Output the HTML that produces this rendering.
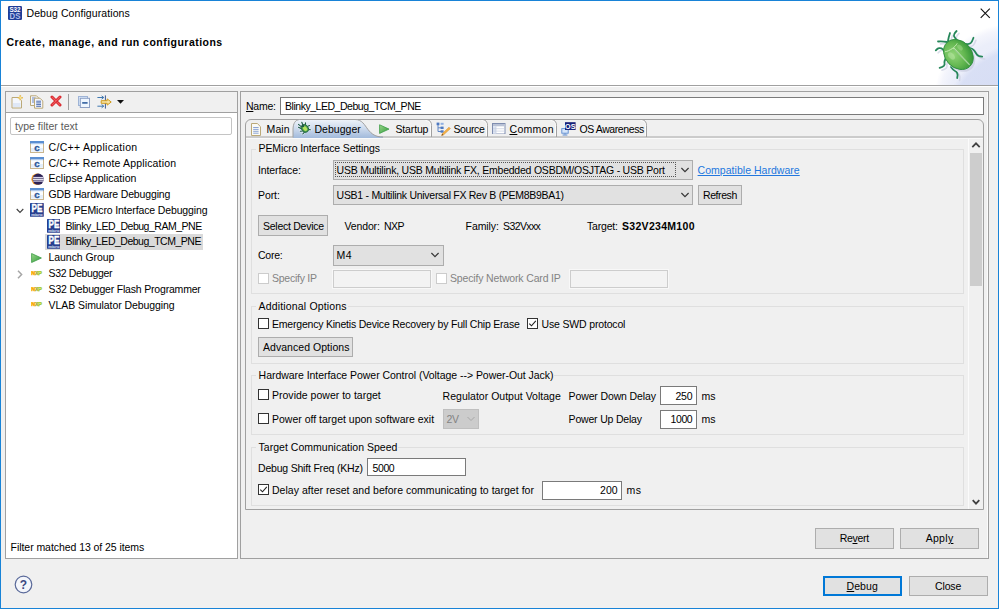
<!DOCTYPE html>
<html lang="en"><head><meta charset="utf-8"><title>Debug Configurations</title>
<style>
*{box-sizing:border-box}
html,body{margin:0;padding:0}
body{width:999px;height:609px;overflow:hidden;position:relative;background:#f0f0f0;font-family:'Liberation Sans',sans-serif;font-size:10.5px;color:#000}
.a{position:absolute}
.t{position:absolute;white-space:pre;line-height:14px;height:14px;color:#000}
.b{font-weight:bold}
.g6{color:#5a5a5a}
.g8{color:#838383}
.lnk{color:#2277de;text-decoration:underline}
u{text-decoration:underline;text-underline-offset:1px}
.win{left:0;top:0;width:999px;height:609px;border:1px solid #1883d7;z-index:50;pointer-events:none}
.hdr{left:1px;top:1px;width:997px;height:84px;background:#fff;overflow:hidden}
.sep1{left:1px;top:85px;width:997px;height:1px;background:#a0a0a0}
.sep2{left:1px;top:86px;width:997px;height:1px;background:#fff}
.lp{left:5px;top:91px;width:233px;height:468px;border:1px solid #a0a0a0;background:#fff}
.ltb{left:6px;top:92px;width:231px;height:21px;background:#f0f0f0;border-bottom:1px solid #a0a0a0}
.flt{left:10px;top:117px;width:222px;height:18px;border:1px solid #c4c4c4;border-radius:2px;background:#fff}
.sel{left:45px;top:234px;width:158px;height:16px;background:#dadada}
.rp{left:240px;top:91px;width:749px;height:468px;border:1px solid #a0a0a0}
.rp2{left:987px;top:92px;width:1px;height:466px;background:#fbfbfb}
.inp{background:#fff;border:1px solid #7a7a7a}
.dis{background:#f3f3f3;border:1px solid #cdcdcd;box-shadow:0 0 0 1px #f8f8f8}
.cmb{background:#e1e1e1;border:1px solid #adadad}
.btn{background:#e1e1e1;border:1px solid #adadad}
.grp{border:1px solid #dfdfdf}
.gl{background:#f0f0f0;height:3px}
.cb{width:11px;height:11px;background:#fff;border:1px solid #333}
.cbd{width:11px;height:11px;background:#fff;border:1px solid #cccccc}
.tf{left:245px;top:119px;width:739px;height:391px;border:1px solid #a0a0a0;border-radius:6px 6px 0 0}
.tfl{left:246px;top:136px;width:737px;height:1px;background:#a0a0a0}
.tfl2{left:246px;top:138px;width:737px;height:1px;background:#fafafa}
.sbt{left:968px;top:139px;width:15px;height:370px;background:#f0f0f0;border-left:1px solid #fbfbfb}
.sbth{left:970px;top:153px;width:12px;height:133px;background:#cdcdcd}
</style></head><body>
<div class="a hdr" style="background:radial-gradient(circle at 1029px 129px,rgba(210,217,243,.9) 0,rgba(214,221,244,.85) 82px,rgba(224,229,247,0) 89px),radial-gradient(circle at 1009px 99px,#e6e9f8 0,#ebeefa 60px,#f4f5fc 70px,#fff 76px),#fff"></div>
<div class="a sep1"></div><div class="a sep2"></div>
<!-- title icon -->
<svg class="a" style="left:8px;top:6px" width="14" height="14" viewBox="0 0 14 14"><rect width="14" height="14" rx="1.2" fill="#1f3e97"/><text x="1.4" y="5.9" font-family="'Liberation Sans',sans-serif" font-weight="bold" font-size="6.4" fill="#fff" textLength="11.2" lengthAdjust="spacingAndGlyphs">S32</text><text x="1.6" y="12.6" font-family="'Liberation Sans',sans-serif" font-weight="bold" font-size="8.4" fill="#b4c1ea" textLength="10.8" lengthAdjust="spacingAndGlyphs">DS</text></svg>
<!-- close X -->
<svg class="a" style="left:980px;top:8px" width="11" height="11" viewBox="0 0 11 11"><path d="M0.7 0.7L9.8 9.8M9.8 0.7L0.7 9.8" stroke="#111" stroke-width="1.1" fill="none"/></svg>
<!-- bug -->
<svg class="a" style="left:930px;top:26px" width="60" height="58" viewBox="0 0 60 58">
<defs><radialGradient id="bg1" cx="0.36" cy="0.4" r="0.7"><stop offset="0" stop-color="#93d57a"/><stop offset="0.55" stop-color="#63b750"/><stop offset="0.9" stop-color="#3c9a3c"/><stop offset="1" stop-color="#2f8a36"/></radialGradient></defs>
<g fill="none" stroke="#cfd2e4" stroke-width="1.6" stroke-linecap="round" stroke-linejoin="round" transform="translate(2.4,2.4)" opacity="0.75"><path d='M17.0 16.0Q12.0 15.0 8.0 15.5'/><path d='M18.0 15.0Q18.6 11.0 20.0 7.0'/><path d='M27.5 15.0Q25.5 12.5 24.6 11.2Q23.6 10.0 24.1 8.5Q24.5 7.0 26.6 5.0'/><path d='M33.0 17.0Q36.0 18.5 37.8 18.1Q39.5 17.8 40.8 16.9Q42.0 16.0 43.5 11.8'/><path d='M39.0 21.5Q43.0 22.5 44.2 24.5Q45.5 26.5 46.8 28.5Q48.0 30.5 52.2 30.6'/><path d='M15.5 26.5Q13.0 23.0 11.5 22.4Q10.0 21.8 8.8 22.2Q7.5 22.6 5.8 24.4'/><path d='M16.0 32.0Q14.0 35.5 14.5 37.0Q15.0 38.5 13.8 39.8Q12.5 41.0 9.6 41.8'/><path d='M21.0 41.0Q23.5 44.5 25.0 45.0Q26.5 45.5 27.2 47.0Q28.0 48.5 27.2 52.0'/></g>
<g fill="none" stroke="#26875a" stroke-width="1.8" stroke-linecap="round" stroke-linejoin="round"><path d='M17.0 16.0Q12.0 15.0 8.0 15.5'/><path d='M18.0 15.0Q18.6 11.0 20.0 7.0'/><path d='M27.5 15.0Q25.5 12.5 24.6 11.2Q23.6 10.0 24.1 8.5Q24.5 7.0 26.6 5.0'/><path d='M33.0 17.0Q36.0 18.5 37.8 18.1Q39.5 17.8 40.8 16.9Q42.0 16.0 43.5 11.8'/><path d='M39.0 21.5Q43.0 22.5 44.2 24.5Q45.5 26.5 46.8 28.5Q48.0 30.5 52.2 30.6'/><path d='M15.5 26.5Q13.0 23.0 11.5 22.4Q10.0 21.8 8.8 22.2Q7.5 22.6 5.8 24.4'/><path d='M16.0 32.0Q14.0 35.5 14.5 37.0Q15.0 38.5 13.8 39.8Q12.5 41.0 9.6 41.8'/><path d='M21.0 41.0Q23.5 44.5 25.0 45.0Q26.5 45.5 27.2 47.0Q28.0 48.5 27.2 52.0'/></g>
<ellipse cx="30.2" cy="30.6" rx="13.3" ry="16.8" transform="rotate(-44 30.2 30.6)" fill="#c3c7da" opacity="0.6"/>
<ellipse cx="28.4" cy="28.5" rx="13.2" ry="16.5" transform="rotate(-44 28.4 28.5)" fill="url(#bg1)" stroke="#2f8f40" stroke-width="0.9"/>
<path d="M23.5 22.2L39.6 38.8" stroke="#d9f2cc" stroke-width="1.1" fill="none"/>
<path d="M24 23L40.2 39.6" stroke="#3c9440" stroke-width="0.6" fill="none" opacity="0.7"/>
<path d="M15 25.8C19.5 25 25.5 21 27.2 17.4" stroke="#c6ebb4" stroke-width="1" fill="none"/>
<ellipse cx="21.5" cy="30" rx="2.6" ry="4.2" transform="rotate(-44 21.5 30)" fill="#c4ecb0" opacity="0.45"/>
<ellipse cx="30" cy="21.5" rx="2" ry="3.4" transform="rotate(-44 30 21.5)" fill="#c4ecb0" opacity="0.35"/>
</svg>
<!-- left panel -->
<div class="a lp"></div><div class="a ltb"></div>
<div class="a flt"></div>
<div class="a sel"></div>
<svg class='a' style='left:11px;top:95px' width='13' height='14' viewBox='0 0 13 14'><path d='M1 2.5h6.5l3 3V13H1z' fill='#f4f7fc' stroke='#bba978' stroke-width='1'/><path d='M2 8h7.5v4H2z' fill='#dfe8f6'/><path d='M9.3 0.3v5M6.8 2.8h5' stroke='#e3b53c' stroke-width='1.6'/><path d='M9.3 1.2v3.2M7.7 2.8h3.2' stroke='#fff6c8' stroke-width='0.6'/></svg>
<svg class='a' style='left:30px;top:95px' width='14' height='14' viewBox='0 0 14 14'><path d='M0.5 0.8h6l2 2V10.5h-8z' fill='#f4f6fb' stroke='#bba978' stroke-width='1'/><path d='M2 3h3.5M2 5h3.5M2 7h3.5' stroke='#5b79b8' stroke-width='0.9'/><path d='M4.5 3.2h5.5l2.8 2.8V13.2H4.5z' fill='#f4f6fb' stroke='#bba978' stroke-width='1'/><path d='M6.2 6.2h4.8M6.2 7.9h4.8M6.2 9.6h4.8M6.2 11.3h4.8' stroke='#4f6fb0' stroke-width='1'/></svg>
<svg class='a' style='left:50.3px;top:95.3px' width='12' height='12' viewBox='0 0 12 12'><path d='M2 2L10 10M10 2L2 10' stroke='#d8262c' stroke-width='3' stroke-linecap='round'/><path d='M2.2 2.2L9.8 9.8M9.8 2.2L2.2 9.8' stroke='#ee5a5f' stroke-width='1.1' stroke-linecap='round'/></svg>
<div class='a' style='left:68px;top:94px;width:1px;height:16px;background:#a0a0a0'></div>
<svg class='a' style='left:78px;top:96px' width='12' height='12' viewBox='0 0 12 12'><rect x='0.5' y='0.5' width='9' height='9' fill='#dbe9fa' stroke='#9fb4d6'/><rect x='2.3' y='2.3' width='9.2' height='9.2' fill='#eef6ff' stroke='#8c9fc4'/><rect x='4.2' y='6.1' width='5.4' height='1.6' fill='#2f5f9e'/></svg>
<svg class='a' style='left:97px;top:95px' width='15' height='14' viewBox='0 0 15 14'><path d='M8.4 0.4V13.6' stroke='#3d5a92' stroke-width='1'/><path d='M0.4 2.5H6.6M4.6 0.9L6.8 2.5L4.6 4.1' stroke='#3f78b0' stroke-width='1' fill='none'/><path d='M0.4 11.2H6.6M4.6 9.6L6.8 11.2L4.6 12.8' stroke='#3f78b0' stroke-width='1' fill='none'/><path d='M4.2 5.7H10.2V3.9L14.2 7L10.2 10.1V8.3H4.2Z' fill='#f6e3a6' stroke='#cf9a1c' stroke-width='1' stroke-linejoin='round'/></svg>
<svg class='a' style='left:117px;top:100px' width='7' height='4' viewBox='0 0 7 4'><path d='M0 0H7L3.5 3.8Z' fill='#111'/></svg>
<svg class='a' style='left:30px;top:141px' width='14' height='12' viewBox='0 0 14 12'><rect x='0.5' y='0.5' width='13' height='11' fill='#fbfdff' stroke='#c9b68f' stroke-width='1'/><rect x='0' y='0' width='14' height='2.6' fill='#5b8fd2'/><rect x='1' y='2.6' width='12' height='0.8' fill='#cfe0f5'/><rect x='1' y='7' width='12' height='3.6' fill='#e3eefb'/><text x='7.1' y='10.2' font-family="'Liberation Sans',sans-serif" font-weight='bold' font-size='9.8' fill='#2a5596' stroke='#2a5596' stroke-width='0.3' text-anchor='middle'>c</text></svg>
<svg class='a' style='left:30px;top:156.7px' width='14' height='12' viewBox='0 0 14 12'><rect x='0.5' y='0.5' width='13' height='11' fill='#fbfdff' stroke='#c9b68f' stroke-width='1'/><rect x='0' y='0' width='14' height='2.6' fill='#5b8fd2'/><rect x='1' y='2.6' width='12' height='0.8' fill='#cfe0f5'/><rect x='1' y='7' width='12' height='3.6' fill='#e3eefb'/><text x='7.1' y='10.2' font-family="'Liberation Sans',sans-serif" font-weight='bold' font-size='9.8' fill='#2a5596' stroke='#2a5596' stroke-width='0.3' text-anchor='middle'>c</text></svg>
<svg class='a' style='left:30.8px;top:172.8px' width='13.2' height='12.4' viewBox='0 0 13.2 12.4'><circle cx='6' cy='6.2' r='5.6' fill='#f59a23'/><circle cx='7.2' cy='6.2' r='5.6' fill='#2c2255'/><rect x='2.2' y='3.9' width='10.4' height='1.2' fill='#d9d6ea'/><rect x='1.8' y='5.7' width='11' height='1.2' fill='#f4f3fa'/><rect x='2.2' y='7.5' width='10.4' height='1.2' fill='#d9d6ea'/></svg>
<svg class='a' style='left:30px;top:188.3px' width='14' height='12' viewBox='0 0 14 12'><rect x='0.5' y='0.5' width='13' height='11' fill='#fbfdff' stroke='#c9b68f' stroke-width='1'/><rect x='0' y='0' width='14' height='2.6' fill='#5b8fd2'/><rect x='1' y='2.6' width='12' height='0.8' fill='#cfe0f5'/><rect x='1' y='7' width='12' height='3.6' fill='#e3eefb'/><text x='7.1' y='10.2' font-family="'Liberation Sans',sans-serif" font-weight='bold' font-size='9.8' fill='#2a5596' stroke='#2a5596' stroke-width='0.3' text-anchor='middle'>c</text></svg>
<svg class='a' style='left:16px;top:208px' width='8' height='6' viewBox='0 0 8 6'><path d='M0.7 1L4 4.4L7.3 1' stroke='#404040' stroke-width='1.1' fill='none'/></svg>
<svg class='a' style='left:30px;top:203.2px' width='13.8' height='13.8' viewBox='0 0 14 14'><rect x='0' y='0' width='14' height='14' rx='0.6' fill='#283f8f'/><text x='1.6' y='9.5' font-family="'Liberation Sans',sans-serif" font-weight='bold' font-size='10.2' fill='#fff' stroke='#fff' stroke-width='0.35' textLength='11' lengthAdjust='spacingAndGlyphs'>PE</text><text x='1.3' y='12.9' font-family="'Liberation Sans',sans-serif" font-weight='bold' font-size='3.4' fill='#e6ebfa' textLength='11.4' lengthAdjust='spacingAndGlyphs'>micro</text></svg>
<svg class='a' style='left:46.5px;top:219px' width='13.8' height='13.8' viewBox='0 0 14 14'><rect x='0' y='0' width='14' height='14' rx='0.6' fill='#283f8f'/><text x='1.6' y='9.5' font-family="'Liberation Sans',sans-serif" font-weight='bold' font-size='10.2' fill='#fff' stroke='#fff' stroke-width='0.35' textLength='11' lengthAdjust='spacingAndGlyphs'>PE</text><text x='1.3' y='12.9' font-family="'Liberation Sans',sans-serif" font-weight='bold' font-size='3.4' fill='#e6ebfa' textLength='11.4' lengthAdjust='spacingAndGlyphs'>micro</text></svg>
<svg class='a' style='left:46.5px;top:234.9px' width='13.8' height='13.8' viewBox='0 0 14 14'><rect x='0' y='0' width='14' height='14' rx='0.6' fill='#283f8f'/><text x='1.6' y='9.5' font-family="'Liberation Sans',sans-serif" font-weight='bold' font-size='10.2' fill='#fff' stroke='#fff' stroke-width='0.35' textLength='11' lengthAdjust='spacingAndGlyphs'>PE</text><text x='1.3' y='12.9' font-family="'Liberation Sans',sans-serif" font-weight='bold' font-size='3.4' fill='#e6ebfa' textLength='11.4' lengthAdjust='spacingAndGlyphs'>micro</text></svg>
<svg class='a' style='left:31.3px;top:253px' width='11' height='10' viewBox='0 0 11 10'><defs><linearGradient id='pg31' x1='0' y1='0' x2='1' y2='1'><stop offset='0' stop-color='#9bd78a'/><stop offset='1' stop-color='#2f9a3a'/></linearGradient></defs><path d='M0.6 0.5L10.4 5L0.6 9.5Z' fill='url(#pg31)' stroke='#3b9b45' stroke-width='0.8' stroke-linejoin='round'/></svg>
<svg class='a' style='left:17.2px;top:270.2px' width='6' height='9' viewBox='0 0 6 9'><path d='M1 0.8L4.6 4.5L1 8.2' stroke='#a6a6a6' stroke-width='1.5' fill='none'/></svg>
<svg class='a' style='left:31.2px;top:270.9px' width='11.5' height='5.4' viewBox='0 0 11.5 5.4'><text x='0.2' y='4.3' font-family="'Liberation Sans',sans-serif" font-weight='bold' font-size='5.4' stroke-width='0.45' fill='#f8a900' stroke='#f8a900'>N</text><text x='3.9' y='4.3' font-family="'Liberation Sans',sans-serif" font-weight='bold' font-size='5.4' stroke-width='0.45' fill='#a9b43a' stroke='#a9b43a'>X</text><text x='7.2' y='4.3' font-family="'Liberation Sans',sans-serif" font-weight='bold' font-size='5.4' stroke-width='0.45' fill='#a6cf38' stroke='#a6cf38'>P</text></svg>
<svg class='a' style='left:31.2px;top:286.6px' width='11.5' height='5.4' viewBox='0 0 11.5 5.4'><text x='0.2' y='4.3' font-family="'Liberation Sans',sans-serif" font-weight='bold' font-size='5.4' stroke-width='0.45' fill='#f8a900' stroke='#f8a900'>N</text><text x='3.9' y='4.3' font-family="'Liberation Sans',sans-serif" font-weight='bold' font-size='5.4' stroke-width='0.45' fill='#a9b43a' stroke='#a9b43a'>X</text><text x='7.2' y='4.3' font-family="'Liberation Sans',sans-serif" font-weight='bold' font-size='5.4' stroke-width='0.45' fill='#a6cf38' stroke='#a6cf38'>P</text></svg>
<svg class='a' style='left:31.2px;top:302.4px' width='11.5' height='5.4' viewBox='0 0 11.5 5.4'><text x='0.2' y='4.3' font-family="'Liberation Sans',sans-serif" font-weight='bold' font-size='5.4' stroke-width='0.45' fill='#f8a900' stroke='#f8a900'>N</text><text x='3.9' y='4.3' font-family="'Liberation Sans',sans-serif" font-weight='bold' font-size='5.4' stroke-width='0.45' fill='#a9b43a' stroke='#a9b43a'>X</text><text x='7.2' y='4.3' font-family="'Liberation Sans',sans-serif" font-weight='bold' font-size='5.4' stroke-width='0.45' fill='#a6cf38' stroke='#a6cf38'>P</text></svg>
<!-- right panel -->
<div class="a rp"></div><div class="a rp2"></div>
<div class="a inp" style="left:280px;top:97px;width:704px;height:18px"></div>
<div class="a tf"></div>
<svg class='a' style='left:245px;top:118px' width='740' height='21' viewBox='245 118 740 21'><defs><linearGradient id='selg' x1='0' y1='0' x2='0' y2='1'><stop offset='0' stop-color='#eef3fa'/><stop offset='0.45' stop-color='#cfdcee'/><stop offset='1' stop-color='#a2badb'/></linearGradient></defs><path d='M246 137H983' stroke='#a6a6a6' stroke-width='1'/><path d='M431.5 137V125.5C431.5 122 430 120 426.5 119.5' stroke='#a0a0a0' stroke-width='1' fill='none'/><path d='M430.5 136V125.5C430.5 122.5 429 121 425.5 120.5' stroke='#fbfbfb' stroke-width='1' fill='none'/><path d='M487.5 137V125.5C487.5 122 486 120 482.5 119.5' stroke='#a0a0a0' stroke-width='1' fill='none'/><path d='M486.5 136V125.5C486.5 122.5 485 121 481.5 120.5' stroke='#fbfbfb' stroke-width='1' fill='none'/><path d='M556.5 137V125.5C556.5 122 555 120 551.5 119.5' stroke='#a0a0a0' stroke-width='1' fill='none'/><path d='M555.5 136V125.5C555.5 122.5 554 121 550.5 120.5' stroke='#fbfbfb' stroke-width='1' fill='none'/><path d='M646.5 137V125.5C646.5 122 645 120 641.5 119.5' stroke='#a0a0a0' stroke-width='1' fill='none'/><path d='M645.5 136V125.5C645.5 122.5 644 121 640.5 120.5' stroke='#fbfbfb' stroke-width='1' fill='none'/><path d='M293 138V129C293.3 123.5 295 120 299.5 119.5H355C362 119.5 364.5 125 368 129.5S375.5 137 383 137V138Z' fill='url(#selg)'/><path d='M293 137.5V129C293.3 123.5 295 120 299.5 119.5H355C362 119.5 364.5 125 368 129.5S375.5 137 383 137' fill='none' stroke='#a0a0a0' stroke-width='1'/></svg>
<svg class='a' style='left:251px;top:122.5px' width='10' height='13' viewBox='0 0 10 13'><path d='M0.5 0.5H6.3L9.5 3.7V12.5H0.5Z' fill='#fbfbf6' stroke='#bba978'/><path d='M2.2 4.5h5.4M2.2 6.4h5.4M2.2 8.3h5.4M2.2 10.2h5.4' stroke='#7f9ad0' stroke-width='0.9'/></svg>
<svg class='a' style='left:297.2px;top:120.7px' width='15' height='14' viewBox='0 0 15 14'><g stroke='#eef3fa' stroke-width='2.4' fill='none' stroke-linecap='round' opacity='0.7'><path d='M6.3 5.2L4.8 1.2M8.6 4.6L8.5 1.7M10.2 5.6L12.6 4.6M5.4 6.6L1.5 3.3M5 8L1.5 6.2M10.8 8.4L13.4 8.8M6 10L3.3 10.2M7.6 10.8L5.8 13'/></g><g stroke='#1f5a48' stroke-width='1.1' fill='none' stroke-linecap='round'><path d='M6.3 5.2L4.8 1.2M8.6 4.6L8.5 1.7M10.2 5.6L12.6 4.6M5.4 6.6L1.5 3.3M5 8L1.5 6.2M10.8 8.4L13.4 8.8M6 10L3.3 10.2M7.6 10.8L5.8 13'/></g><ellipse cx='7.9' cy='7.4' rx='3.3' ry='4.2' transform='rotate(-40 7.9 7.4)' fill='#4f9e4a' stroke='#256a46' stroke-width='0.9'/><ellipse cx='8.1' cy='7.6' rx='1.9' ry='2.6' transform='rotate(-40 8.1 7.6)' fill='#b4e35e'/><circle cx='5.9' cy='4.9' r='1.3' fill='#1f5a48'/></svg>
<svg class='a' style='left:379.3px;top:124px' width='10.6' height='10.2' viewBox='0 0 11 10'><defs><linearGradient id='pg379' x1='0' y1='0' x2='1' y2='1'><stop offset='0' stop-color='#9bd78a'/><stop offset='1' stop-color='#2f9a3a'/></linearGradient></defs><path d='M0.6 0.5L10.4 5L0.6 9.5Z' fill='url(#pg379)' stroke='#3b9b45' stroke-width='0.8' stroke-linejoin='round'/></svg>
<svg class='a' style='left:435.5px;top:122px' width='15' height='14' viewBox='0 0 15 14'><path d='M2 2V9.5M2 5.8H5.5M2 9.5H5.5' stroke='#5f86c6' stroke-width='1' fill='none'/><rect x='0.6' y='0.6' width='2.8' height='2.6' fill='#4d78c0'/><rect x='4.6' y='0.8' width='3' height='2' fill='#8fb0e2'/><rect x='4.6' y='4.6' width='3' height='2.4' fill='#4d78c0'/><rect x='4.6' y='8.3' width='3' height='2.4' fill='#4d78c0'/><path d='M13 5.2L14.4 6.6L7.4 13L5.6 13.6L6.2 11.8Z' fill='#f4b24a' stroke='#d48a1e' stroke-width='0.5'/><path d='M5.6 13.6L6.2 11.8L7.4 13Z' fill='#6a4a2a'/></svg>
<svg class='a' style='left:492px;top:122.5px' width='13.5' height='11.5' viewBox='0 0 13.5 11.5'><rect x='0.5' y='0.5' width='12.5' height='10.5' fill='#fff' stroke='#7f8db0'/><rect x='1' y='1' width='11.5' height='2.3' fill='#b9c2d6'/><rect x='1' y='3.3' width='3' height='7.2' fill='#dbe3f2'/><path d='M4 3.3V10.5M1 5.7H12.5M1 8.1H12.5' stroke='#c5cde0' stroke-width='0.7'/></svg>
<svg class='a' style='left:561px;top:121.5px' width='15' height='14' viewBox='0 0 15 14'><rect x='0.8' y='6.6' width='6.4' height='4.6' fill='#d6e6fa' stroke='#5a8ad0' stroke-width='0.9'/><path d='M4 11.4V12.6M1.6 13H6.4' stroke='#5a8ad0' stroke-width='1'/><rect x='4' y='0.2' width='10.6' height='7.8' fill='#16207a'/><text x='9.3' y='6.8' font-family="'Liberation Sans',sans-serif" font-weight='bold' font-size='7.2' fill='#fff' text-anchor='middle'>OS</text></svg>
<div class="a tfl2"></div>
<div class="a sbt"></div><div class="a sbth"></div>
<svg class="a" style="left:971px;top:141px" width="10" height="8" viewBox="0 0 10 8"><path d="M1.3 6.2L5 2.3L8.7 6.2" stroke="#404040" stroke-width="1.7" fill="none"/></svg>
<svg class="a" style="left:971px;top:497.5px" width="10" height="8" viewBox="0 0 10 8"><path d="M1.7 2.2L5 5.6L8.3 2.2" stroke="#404040" stroke-width="1.8" fill="none"/></svg>

<!-- groups -->
<div class="a grp" style="left:251px;top:149px;width:713px;height:145px"></div>
<div class="a gl" style="left:256px;top:148px;width:125px"></div>
<div class="a grp" style="left:251px;top:306px;width:713px;height:58px"></div>
<div class="a gl" style="left:256px;top:305px;width:92px"></div>
<div class="a grp" style="left:251px;top:375px;width:713px;height:60px"></div>
<div class="a gl" style="left:256px;top:374px;width:298px"></div>
<div class="a grp" style="left:251px;top:447px;width:713px;height:59px"></div>
<div class="a gl" style="left:256px;top:446px;width:142px"></div>

<!-- controls -->
<div class="a cmb" style="left:333px;top:159.5px;width:360px;height:20.5px"></div>
<div class="a" style="left:335px;top:162px;width:341px;height:15px;border:1px dotted #555"></div>
<svg class="a" style="left:680px;top:166px" width="10" height="8" viewBox="0 0 10 8"><path d="M1.4 2L5 5.6L8.6 2" stroke="#383838" stroke-width="1.2" fill="none"/></svg>
<div class="a cmb" style="left:333px;top:185px;width:360px;height:20px"></div>
<svg class="a" style="left:680px;top:191px" width="10" height="8" viewBox="0 0 10 8"><path d="M1.4 2L5 5.6L8.6 2" stroke="#383838" stroke-width="1.2" fill="none"/></svg>
<div class="a btn" style="left:698px;top:185px;width:44px;height:20px"></div>
<div class="a btn" style="left:258px;top:215px;width:70px;height:21px"></div>
<div class="a cmb" style="left:333px;top:245px;width:111px;height:21px"></div>
<svg class="a" style="left:430px;top:251px" width="10" height="8" viewBox="0 0 10 8"><path d="M1.4 2L5 5.6L8.6 2" stroke="#383838" stroke-width="1.2" fill="none"/></svg>
<div class="a cbd" style="left:258px;top:273px"></div>
<div class="a dis" style="left:333px;top:270px;width:98px;height:18px"></div>
<div class="a cbd" style="left:436px;top:273px"></div>
<div class="a dis" style="left:570px;top:270px;width:98px;height:18px"></div>

<div class="a cb" style="left:258px;top:318px"></div>
<div class="a cb" style="left:527px;top:318px"></div>
<svg class="a" style="left:527px;top:318px" width="11" height="11" viewBox="0 0 11 11"><path d="M2.3 5.6L4.5 7.8L8.8 2.8" stroke="#222" stroke-width="1.1" fill="none"/></svg>
<div class="a btn" style="left:258px;top:337px;width:95px;height:20px"></div>

<div class="a cb" style="left:258px;top:389px"></div>
<div class="a cb" style="left:258px;top:413px"></div>
<div class="a" style="left:443px;top:409px;width:36px;height:20px;background:#cccccc;border:1px solid #bfbfbf"></div>
<svg class="a" style="left:466px;top:415px" width="10" height="8" viewBox="0 0 10 8"><path d="M1.5 2L5 5.5L8.5 2" stroke="#a8a8a8" stroke-width="1" fill="none"/></svg>
<div class="a inp" style="left:660px;top:386px;width:37px;height:19px"></div>
<div class="a inp" style="left:660px;top:410px;width:37px;height:19px"></div>

<div class="a inp" style="left:367px;top:458px;width:99px;height:18px"></div>
<div class="a cb" style="left:258px;top:484px"></div>
<svg class="a" style="left:258px;top:484px" width="11" height="11" viewBox="0 0 11 11"><path d="M2.3 5.6L4.5 7.8L8.8 2.8" stroke="#222" stroke-width="1.1" fill="none"/></svg>
<div class="a inp" style="left:542px;top:481px;width:80px;height:19px"></div>

<div class="a btn" style="left:815px;top:528px;width:79px;height:21px"></div>
<div class="a btn" style="left:900px;top:528px;width:79px;height:21px"></div>
<div class="a btn" style="left:823px;top:576px;width:79px;height:20px;border:2px solid #0078d7"></div>
<div class="a btn" style="left:909px;top:576px;width:79px;height:20px"></div>
<!-- help -->
<svg class="a" style="left:14px;top:575px" width="19" height="19" viewBox="0 0 19 19"><circle cx="9.5" cy="9.5" r="8.3" fill="#f4f6fb" stroke="#5a6a9a" stroke-width="1.2"/><text x="9.5" y="13.6" font-family="Liberation Sans,sans-serif" font-weight="bold" font-size="12" fill="#3c4a82" text-anchor="middle">?</text></svg>

<div class='t' style='left:26.5px;top:6.2px;letter-spacing:0.09px'>Debug Configurations</div>
<div class='t b' style='left:6.4px;top:35.1px;letter-spacing:0.47px'>Create, manage, and run configurations</div>
<div class='t g6' style='left:15.0px;top:118.8px;letter-spacing:0.02px'>type filter text</div>
<div class='t' style='left:48.6px;top:139.8px;letter-spacing:0.28px'>C/C++ Application</div>
<div class='t' style='left:48.6px;top:155.5px;letter-spacing:0.16px'>C/C++ Remote Application</div>
<div class='t' style='left:48.6px;top:171.2px;letter-spacing:0.01px'>Eclipse Application</div>
<div class='t' style='left:48.6px;top:187.0px;letter-spacing:-0.15px'>GDB Hardware Debugging</div>
<div class='t' style='left:48.6px;top:202.8px;letter-spacing:-0.13px'>GDB PEMicro Interface Debugging</div>
<div class='t' style='left:65.6px;top:218.7px;letter-spacing:-0.48px'>Blinky_LED_Debug_RAM_PNE</div>
<div class='t' style='left:65.6px;top:234.4px;letter-spacing:-0.49px'>Blinky_LED_Debug_TCM_PNE</div>
<div class='t' style='left:48.6px;top:250.2px;letter-spacing:-0.08px'>Launch Group</div>
<div class='t' style='left:48.6px;top:266.1px;letter-spacing:-0.34px'>S32 Debugger</div>
<div class='t' style='left:48.6px;top:281.9px;letter-spacing:-0.19px'>S32 Debugger Flash Programmer</div>
<div class='t' style='left:48.6px;top:297.6px;letter-spacing:-0.08px'>VLAB Simulator Debugging</div>
<div class='t' style='left:10.6px;top:540.4px;letter-spacing:-0.06px'>Filter matched 13 of 25 items</div>
<div class='t' style='left:246.0px;top:98.8px;letter-spacing:-0.23px'><u>N</u>ame:</div>
<div class='t' style='left:285.0px;top:98.8px;letter-spacing:-0.47px'>Blinky_LED_Debug_TCM_PNE</div>
<div class='t' style='left:266.5px;top:121.8px;letter-spacing:0.13px'>Main</div>
<div class='t' style='left:314.5px;top:121.8px;letter-spacing:0.02px'>Debugger</div>
<div class='t' style='left:395.5px;top:121.8px;letter-spacing:-0.15px'>Startup</div>
<div class='t' style='left:453.5px;top:121.8px;letter-spacing:-0.40px'>Source</div>
<div class='t' style='left:509.5px;top:121.8px;letter-spacing:0.28px'><u>C</u>ommon</div>
<div class='t' style='left:579.5px;top:121.8px;letter-spacing:-0.41px'>OS Awareness</div>
<div class='t' style='left:258.6px;top:141.4px;letter-spacing:-0.12px'>PEMicro Interface Settings</div>
<div class='t' style='left:258.0px;top:162.8px;letter-spacing:-0.10px'>Interface:</div>
<div class='t' style='left:336.6px;top:162.8px;letter-spacing:-0.22px'>USB Multilink, USB Multilink FX, Embedded OSBDM/OSJTAG - USB Port</div>
<div class='t lnk' style='left:697.6px;top:162.8px;letter-spacing:0.03px'>Compatible Hardware</div>
<div class='t' style='left:258.0px;top:187.8px;letter-spacing:-0.08px'>Port:</div>
<div class='t' style='left:336.6px;top:187.8px;letter-spacing:-0.28px'>USB1 - Multilink Universal FX Rev B (PEM8B9BA1)</div>
<div class='t' style='left:703.0px;top:187.8px;letter-spacing:-0.42px'>Refresh</div>
<div class='t' style='left:263.0px;top:218.8px;letter-spacing:-0.26px'>Select Device</div>
<div class='t' style='left:344.4px;top:218.8px;letter-spacing:-0.11px'>Vendor:</div>
<div class='t' style='left:384.0px;top:218.8px;letter-spacing:-0.60px'>NXP</div>
<div class='t' style='left:465.6px;top:218.8px;letter-spacing:-0.09px'>Family:</div>
<div class='t' style='left:503.0px;top:218.8px;letter-spacing:-0.60px'>S32Vxxx</div>
<div class='t' style='left:587.0px;top:218.8px;letter-spacing:-0.19px'>Target:</div>
<div class='t b' style='left:622.0px;top:218.8px;letter-spacing:0.30px'>S32V234M100</div>
<div class='t' style='left:258.0px;top:248.4px;letter-spacing:-0.26px'>Core:</div>
<div class='t' style='left:336.6px;top:248.4px;letter-spacing:0.30px'>M4</div>
<div class='t g8' style='left:272.0px;top:271.2px;letter-spacing:-0.25px'>Specify IP</div>
<div class='t g8' style='left:450.0px;top:271.2px;letter-spacing:-0.16px'>Specify Network Card IP</div>
<div class='t' style='left:258.6px;top:298.8px;letter-spacing:0.16px'>Additional Options</div>
<div class='t' style='left:272.0px;top:316.9px;letter-spacing:-0.21px'>Emergency Kinetis Device Recovery by Full Chip Erase</div>
<div class='t' style='left:541.6px;top:316.9px;letter-spacing:-0.17px'>Use SWD protocol</div>
<div class='t' style='left:263.0px;top:339.5px;letter-spacing:0.04px'>Advanced Options</div>
<div class='t' style='left:258.6px;top:368.0px;letter-spacing:-0.04px'>Hardware Interface Power Control (Voltage --&gt; Power-Out Jack)</div>
<div class='t' style='left:272.0px;top:387.9px;letter-spacing:0.01px'>Provide power to target</div>
<div class='t' style='left:442.6px;top:388.5px;letter-spacing:0.01px'>Regulator Output Voltage</div>
<div class='t' style='left:568.6px;top:388.5px;letter-spacing:-0.13px'>Power Down Delay</div>
<div class='t' style='left:675.6px;top:388.5px;letter-spacing:-0.31px'>250</div>
<div class='t' style='left:701.4px;top:388.5px;letter-spacing:0.20px'>ms</div>
<div class='t' style='left:272.0px;top:411.9px;letter-spacing:0.00px'>Power off target upon software exit</div>
<div class='t g8' style='left:446.6px;top:411.9px;letter-spacing:-0.52px'>2V</div>
<div class='t' style='left:568.6px;top:412.2px;letter-spacing:-0.19px'>Power Up Delay</div>
<div class='t' style='left:670.6px;top:412.2px;letter-spacing:-0.44px'>1000</div>
<div class='t' style='left:701.4px;top:412.2px;letter-spacing:0.20px'>ms</div>
<div class='t' style='left:258.6px;top:440.0px;letter-spacing:0.02px'>Target Communication Speed</div>
<div class='t' style='left:258.0px;top:460.5px;letter-spacing:-0.20px'>Debug Shift Freq (KHz)</div>
<div class='t' style='left:372.6px;top:460.5px;letter-spacing:-0.44px'>5000</div>
<div class='t' style='left:272.0px;top:482.9px;letter-spacing:0.03px'>Delay after reset and before communicating to target for</div>
<div class='t' style='left:600.0px;top:482.9px;letter-spacing:0.09px'>200</div>
<div class='t' style='left:626.6px;top:482.9px;letter-spacing:0.40px'>ms</div>
<div class='t' style='left:839.7px;top:531.2px;letter-spacing:-0.31px'>Re<u>v</u>ert</div>
<div class='t' style='left:925.7px;top:531.2px;letter-spacing:0.29px'>Appl<u>y</u></div>
<div class='t' style='left:846.6px;top:578.5px;letter-spacing:0.05px'><u>D</u>ebug</div>
<div class='t' style='left:935.0px;top:578.5px;letter-spacing:-0.13px'>Close</div>
<div class="a win"></div>
</body></html>
